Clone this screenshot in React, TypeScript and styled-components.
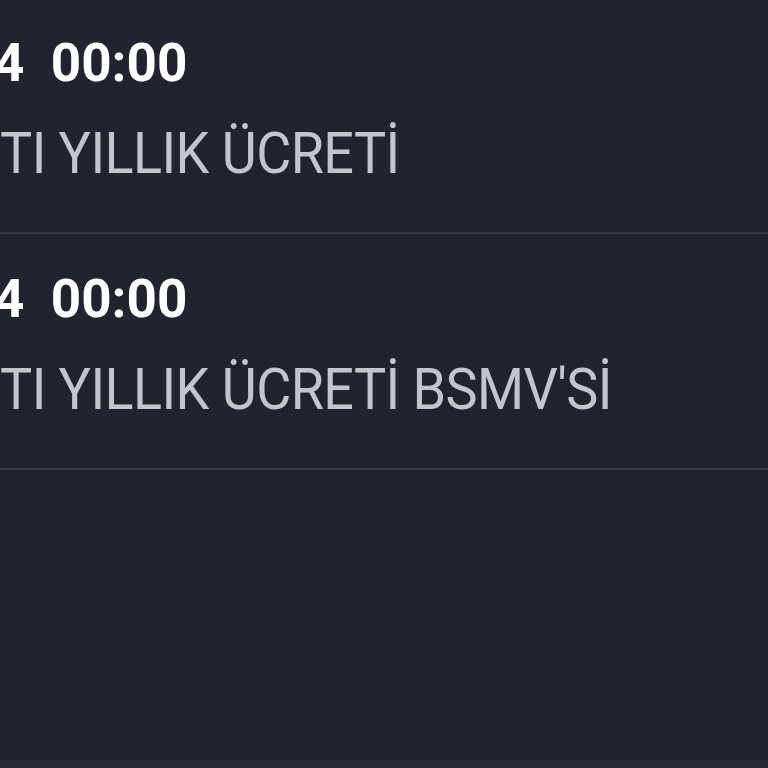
import styled, { createGlobalStyle } from "styled-components";

const GlobalStyle = createGlobalStyle`
  html, body {
    margin: 0;
    padding: 0;
    background: #21232e;
  }
  body {
    font-family: Roboto, "Noto Sans", "Liberation Sans", sans-serif;
  }
`;

const Screen = styled.div`
  width: 768px;
  height: 768px;
  overflow: hidden;
  background: #21232e;
  display: flex;
  flex-direction: column;
`;

const List = styled.div`
  flex: 1;
  display: flex;
  flex-direction: column;
  margin-top: -2px;
`;

const Row = styled.div`
  display: flex;
  flex-direction: column;
  padding: 33px 0 21px;
  border-bottom: 2px solid #373a47;
`;

const Line = styled.div<{ $muted?: boolean }>`
  display: flex;
  white-space: pre;
  margin-left: ${(p) => (p.$muted ? "0" : "-6px")};
  font-size: ${(p) => (p.$muted ? "58px" : "53px")};
  font-weight: ${(p) => (p.$muted ? 400 : 700)};
  line-height: ${(p) => (p.$muted ? "116px" : "64px")};
  color: ${(p) => (p.$muted ? "#c3c4cc" : "#ffffff")};
  letter-spacing: ${(p) => (p.$muted ? "-0.6px" : "0")};
  transform: ${(p) => (p.$muted ? "scaleX(0.93)" : "none")};
  transform-origin: left center;
`;

// hidden head of the text that runs off the left edge
const Lead = styled.span`
  display: flex;
  width: 0;
  justify-content: flex-end;
`;

const Footer = styled.div`
  height: 8px;
  background: #272935;
`;

const items = [
  { date: "31.12.2024", time: "00:00", text: "KARTI YILLIK ÜCRETİ" },
  { date: "31.12.2024", time: "00:00", text: "KARTI YILLIK ÜCRETİ BSMV'Sİ" },
];

export default function App() {
  return (
    <>
      <GlobalStyle />
      <Screen>
        <List>
          {items.map((it, i) => (
            <Row key={i}>
              <Line>
                <Lead>{it.date.slice(0, -1)}</Lead>
                {it.date.slice(-1)}  {it.time}
              </Line>
              <Line $muted>
                <Lead>{it.text.slice(0, 3)}</Lead>
                {it.text.slice(3)}
              </Line>
            </Row>
          ))}
        </List>
        <Footer />
      </Screen>
    </>
  );
}
